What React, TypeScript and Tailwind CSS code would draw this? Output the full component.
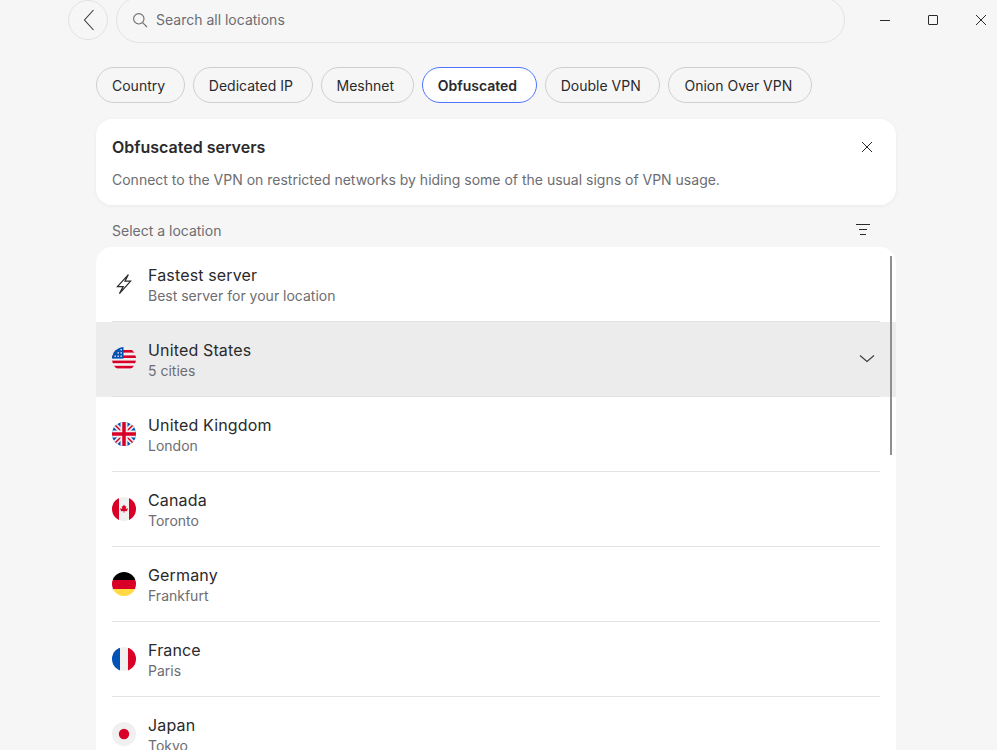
// App.tsx
import React from 'react'

const tabs = ['Country', 'Dedicated IP', 'Meshnet', 'Obfuscated', 'Double VPN', 'Onion Over VPN']

const Flag: React.FC<{ children: React.ReactNode; id: string }> = ({ children, id }) => (
  <svg width="24" height="24" viewBox="0 0 24 24" className="shrink-0">
    <clipPath id={id}>
      <circle cx="12" cy="12" r="12" />
    </clipPath>
    <g clipPath={`url(#${id})`}>{children}</g>
  </svg>
)

const UsFlag = () => (
  <Flag id="us">
    <rect width="24" height="24" fill="#f0f0f0" />
    <rect y="3" width="24" height="2.6" fill="#d80027" />
    <rect y="8.4" width="24" height="2.6" fill="#d80027" />
    <rect y="13.6" width="24" height="2.6" fill="#d80027" />
    <rect y="18.8" width="24" height="2.6" fill="#d80027" />
    <rect width="11.5" height="11.6" fill="#0052b4" />
    <g fill="#f0f0f0">
      <rect x="2.5" y="8.5" width="1.4" height="1.4" />
      <rect x="5.5" y="8.5" width="1.4" height="1.4" />
      <rect x="8.5" y="8.5" width="1.4" height="1.4" />
      <rect x="5.5" y="5.2" width="1.4" height="1.4" />
      <rect x="8.5" y="5.2" width="1.4" height="1.4" />
      <rect x="8.5" y="2" width="1.4" height="1.4" />
    </g>
  </Flag>
)

const UkFlag = () => (
  <Flag id="uk">
    <rect width="24" height="24" fill="#0052b4" />
    <path d="M0 0L24 24M24 0L0 24" stroke="#f0f0f0" strokeWidth="5" />
    <path d="M1 1L24 24M23 1L0 24" stroke="#d80027" strokeWidth="1.5" />
    <path d="M12 0V24M0 12H24" stroke="#f0f0f0" strokeWidth="7" />
    <path d="M12 0V24M0 12H24" stroke="#d80027" strokeWidth="3.5" />
  </Flag>
)

const CaFlag = () => (
  <Flag id="ca">
    <rect width="24" height="24" fill="#f0f0f0" />
    <rect width="7" height="24" fill="#d80027" />
    <rect x="17" width="7" height="24" fill="#d80027" />
    <path
      d="M12 7.5l1.1 2 1.2-.5-.5 2.9 1.7-.6.4 1-1 .9.4 1.1-2.7-.3-.3 1.8h-.6l-.3-1.8-2.7.3.4-1.1-1-.9.4-1 1.7.6-.5-2.9 1.2.5z"
      fill="#d80027"
    />
  </Flag>
)

const DeFlag = () => (
  <Flag id="de">
    <rect width="24" height="8" fill="#000" />
    <rect y="8" width="24" height="9" fill="#d80027" />
    <rect y="17" width="24" height="7" fill="#ffda44" />
  </Flag>
)

const FrFlag = () => (
  <Flag id="fr">
    <rect width="24" height="24" fill="#f0f0f0" />
    <rect width="8" height="24" fill="#0052b4" />
    <rect x="16" width="8" height="24" fill="#d80027" />
  </Flag>
)

const JpFlag = () => (
  <Flag id="jp">
    <rect width="24" height="24" fill="#f0f0f0" />
    <circle cx="12" cy="12" r="5.2" fill="#d80027" />
  </Flag>
)

const BoltIcon = () => (
  <svg width="24" height="24" viewBox="0 0 24 24" fill="none" stroke="#2a2a2c" strokeWidth="1.2" strokeLinejoin="miter" className="shrink-0">
    <path d="M16.4 2.6L5.4 14.6H11.2L7.4 21.6L18.6 9.2H13L16.4 2.6Z" />
  </svg>
)

const Row: React.FC<{
  icon: React.ReactNode
  name: string
  sub: string
  active?: boolean
}> = ({ icon, name, sub, active }) => (
  <div className={`px-4 ${active ? 'bg-[#ececec]' : ''}`}>
    <div className="h-[75px] flex items-center border-b border-[#e3e3e3]">
      <div className="w-9 shrink-0 flex items-center">{icon}</div>
      <div className="flex-1 pt-[2px]">
        <div className="text-base leading-5 tracking-[0.15px] text-[#2a2a2c]">{name}</div>
        <div className="text-sm leading-5 mt-px text-[#6d6d72]">{sub}</div>
      </div>
      {active && (
        <svg width="16" height="10" viewBox="0 0 16 10" fill="none" stroke="#3a3a3c" strokeWidth="1.1" className="mr-[5px]">
          <path d="M1 1.5L8 7.5L15 1.5" />
        </svg>
      )}
    </div>
  </div>
)

const App: React.FC = () => {
  return (
    <div className="h-[750px] overflow-hidden bg-[#f6f6f6] font-['Inter',sans-serif] text-[#2a2a2c]">
      {/* title bar */}
      <div className="flex items-start pl-[68px] h-[43px]">
        <button className="w-10 h-10 shrink-0 rounded-full border border-[#e3e3e3] flex items-center justify-center">
          <svg width="12" height="22" viewBox="0 0 12 22" fill="none" stroke="#3a3a3c" strokeWidth="1.1" className="ml-px">
            <path d="M10.5 1L1.5 11L10.5 21" />
          </svg>
        </button>
        <div className="ml-2 w-[729px] h-[46px] -mt-[3px] shrink-0 rounded-[23px] border border-[#e3e3e3] flex items-center pl-[15px]">
          <svg width="16" height="16" viewBox="0 0 16 16" fill="none" stroke="#6d6d72" strokeWidth="1.1">
            <circle cx="6.8" cy="6.8" r="5.2" />
            <path d="M10.6 10.6L15 15" />
          </svg>
          <span className="ml-2 text-sm text-[#6d6d72]">Search all locations</span>
        </div>
        <div className="flex-1 flex items-center h-10 pl-[35px]">
          <div className="w-[10px] h-px bg-[#2a2a2c]" />
          <div className="ml-[38px] w-[10px] h-[10px] rounded-[1px] border border-[#2a2a2c]" />
          <svg width="12" height="12" viewBox="0 0 12 12" fill="none" stroke="#2a2a2c" strokeWidth="1" className="ml-[37px]">
            <path d="M1 1L11 11M11 1L1 11" />
          </svg>
        </div>
      </div>

      <div className="pl-24">
        {/* filter tabs */}
        <div className="mt-6 flex gap-2">
          {tabs.map((t) =>
            t === 'Obfuscated' ? (
              <div key={t} className="h-9 pl-[15px] pr-[18.7px] pt-[2px] flex items-center rounded-full border border-[#4f73ff] bg-white text-sm font-semibold text-[#2a2a2c]">
                {t}
              </div>
            ) : (
              <div key={t} className="h-9 pl-[15px] pr-[18.7px] pt-[2px] flex items-center rounded-full border border-[#cfcfcf] text-sm text-[#2a2a2c]">
                {t}
              </div>
            ),
          )}
        </div>

        {/* info card */}
        <div className="mt-4 w-[800px] h-[86px] bg-white rounded-2xl shadow-[0_1px_4px_rgba(0,0,0,0.05)] px-4 pt-[17px]">
          <div className="flex items-center justify-between h-[22px]">
            <span className="text-base font-semibold leading-[22px]">Obfuscated servers</span>
            <svg width="12" height="12" viewBox="0 0 12 12" fill="none" stroke="#2a2a2c" strokeWidth="1" className="mr-[7px]">
              <path d="M1 1L11 11M11 1L1 11" />
            </svg>
          </div>
          <p className="mt-[12px] text-sm leading-5 text-[#6d6d72]">
            Connect to the VPN on restricted networks by hiding some of the usual signs of VPN usage.
          </p>
        </div>

        {/* list header */}
        <div className="w-[800px] h-[42px] px-4 flex items-center justify-between">
          <span className="text-sm text-[#6d6d72] mt-[9px]">Select a location</span>
          <svg width="16" height="14" viewBox="0 0 16 14" fill="none" stroke="#2a2a2c" strokeWidth="1" className="mr-[9px] mt-[7px]">
            <path d="M1 1.5H15M4 6.5H12M5 11.5H11" />
          </svg>
        </div>

        {/* locations */}
        <div className="relative w-[800px] h-[600px] bg-white rounded-2xl overflow-hidden">
          <Row icon={<BoltIcon />} name="Fastest server" sub="Best server for your location" />
          <Row icon={<UsFlag />} name="United States" sub="5 cities" active />
          <Row icon={<UkFlag />} name="United Kingdom" sub="London" />
          <Row icon={<CaFlag />} name="Canada" sub="Toronto" />
          <Row icon={<DeFlag />} name="Germany" sub="Frankfurt" />
          <Row icon={<FrFlag />} name="France" sub="Paris" />
          <Row icon={<JpFlag />} name="Japan" sub="Tokyo" />
          <div className="absolute right-[4px] top-[9px] w-[2px] h-[199px] bg-[#8f8f8f]" />
        </div>
      </div>
    </div>
  )
}

export default App
